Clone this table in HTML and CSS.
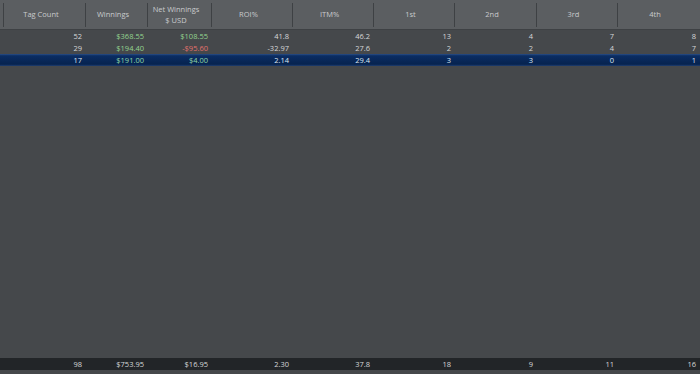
FILE: index.html
```html
<!DOCTYPE html>
<html>
<head>
<meta charset="utf-8">
<link rel="stylesheet" href="styles.css">
</head>
<body>
<div class="grid">
  <div class="head">
    <div class="stub"></div>
    <div class="hc c1">Tag Count</div>
    <div class="hc c2">Winnings</div>
    <div class="hc c3">Net Winnings<br>$ USD</div>
    <div class="hc c4">ROI%</div>
    <div class="hc c4">ITM%</div>
    <div class="hc c4">1st</div>
    <div class="hc c5">2nd</div>
    <div class="hc c4">3rd</div>
    <div class="hc c5 last">4th</div>
  </div>
  <div class="rows">
    <div class="row">
      <div class="stub"></div>
      <div class="cell c1">52</div>
      <div class="cell c2 pos">$368.55</div>
      <div class="cell c3 pos">$108.55</div>
      <div class="cell c4">41.8</div>
      <div class="cell c4">46.2</div>
      <div class="cell c4">13</div>
      <div class="cell c5">4</div>
      <div class="cell c4">7</div>
      <div class="cell c5">8</div>
    </div>
    <div class="row">
      <div class="stub"></div>
      <div class="cell c1">29</div>
      <div class="cell c2 pos">$194.40</div>
      <div class="cell c3 neg">-$95.60</div>
      <div class="cell c4">-32.97</div>
      <div class="cell c4">27.6</div>
      <div class="cell c4">2</div>
      <div class="cell c5">2</div>
      <div class="cell c4">4</div>
      <div class="cell c5">7</div>
    </div>
    <div class="row sel">
      <div class="stub"></div>
      <div class="cell c1">17</div>
      <div class="cell c2 pos">$191.00</div>
      <div class="cell c3 pos">$4.00</div>
      <div class="cell c4">2.14</div>
      <div class="cell c4">29.4</div>
      <div class="cell c4">3</div>
      <div class="cell c5">3</div>
      <div class="cell c4">0</div>
      <div class="cell c5">1</div>
    </div>
  </div>
  <div class="filler"></div>
  <div class="row foot">
    <div class="stub"></div>
    <div class="cell c1">98</div>
    <div class="cell c2">$753.95</div>
    <div class="cell c3">$16.95</div>
    <div class="cell c4">2.30</div>
    <div class="cell c4">37.8</div>
    <div class="cell c4">18</div>
    <div class="cell c5">9</div>
    <div class="cell c4">11</div>
    <div class="cell c5">16</div>
  </div>
  <div class="bottom"></div>
</div>
</body>
</html>
```
FILE: styles.css
```css
html, body {
  margin: 0;
  padding: 0;
  background: #45484b;
}
.grid {
  width: 700px;
  height: 374px;
  display: flex;
  flex-direction: column;
  font-family: "Open Sans", "Noto Sans", sans-serif;
  font-size: 7.5px;
  color: #d6d7d8;
}
.head {
  height: 30px;
  display: flex;
  background: #5b5e61;
  border-bottom: 1px solid #3e4144;
  box-sizing: border-box;
}
.stub {
  width: 4px;
  flex: none;
}
.head .stub {
  border-right: 1px solid #3e4144;
  box-sizing: border-box;
  margin: 3px 0 2px;
}
.c1 { width: 82px; }
.c2 { width: 62px; }
.c3 { width: 64px; }
.c4 { width: 81px; }
.c5 { width: 82px; }
.hc {
  flex: none;
  display: flex;
  align-items: center;
  justify-content: center;
  text-align: center;
  line-height: 11px;
  color: #c9cbcd;
  padding-right: 8px;
  box-sizing: border-box;
  position: relative;
}
.hc::after {
  content: "";
  position: absolute;
  right: 0;
  top: 3px;
  bottom: 2px;
  width: 1px;
  background: #3e4144;
}
.hc.last::after { display: none; }
.rows {
  display: flex;
  flex-direction: column;
}
.row {
  display: flex;
  height: 12px;
  align-items: center;
}
.cell {
  flex: none;
  text-align: right;
  padding-right: 4px;
  box-sizing: border-box;
  line-height: 12px;
}
.pos { color: #93d48f; }
.neg { color: #e2716b; }
.sel {
  background: linear-gradient(#2b4f86 0, #0b2d63 15%, #06234f 85%, #1f3f72 100%);
  color: #dfe6f0;
}
.sel .pos { color: #8fd7a6; }
.filler {
  flex: 1;
}
.foot {
  background: #222528;
  flex: none;
}
.bottom {
  height: 4px;
  flex: none;
  background: #45484b;
}
```
